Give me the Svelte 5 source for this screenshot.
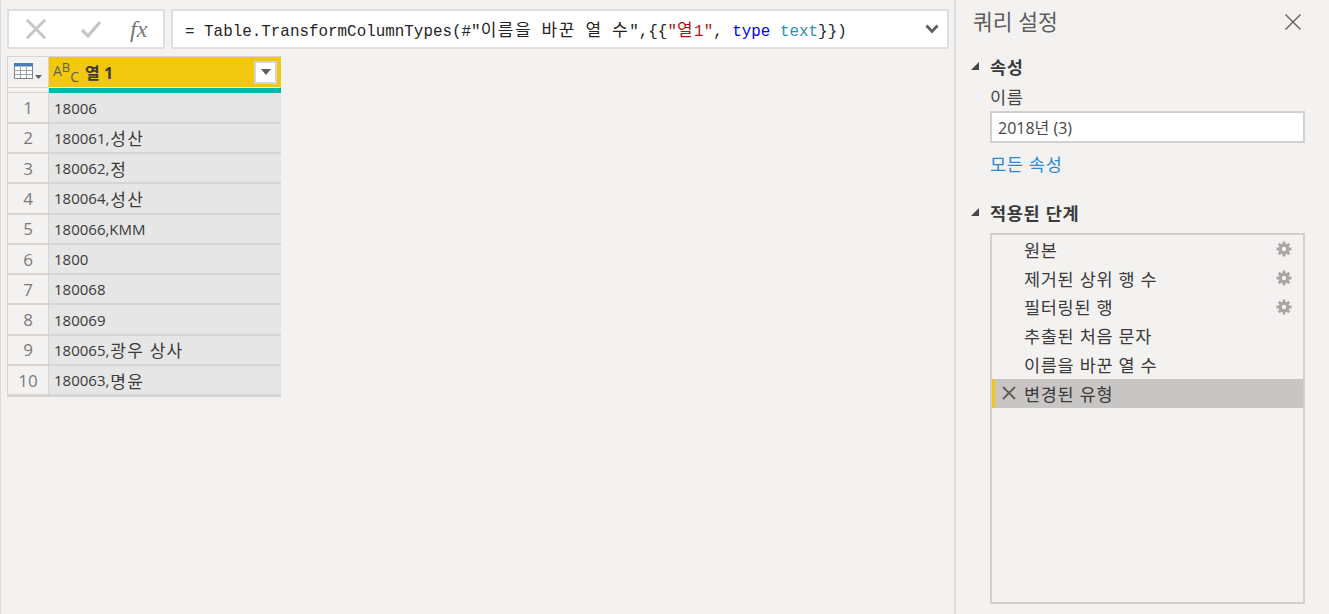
<script>
  const rows = [
    ["18006", ""],
    ["180061,", "성산"],
    ["180062,", "정"],
    ["180064,", "성산"],
    ["180066,KMM", ""],
    ["1800", ""],
    ["180068", ""],
    ["180069", ""],
    ["180065,", "광우 상사"],
    ["180063,", "명윤"]
  ];
  const steps = [
    { name: "원본", gear: true },
    { name: "제거된 상위 행 수", gear: true },
    { name: "필터링된 행", gear: true },
    { name: "추출된 처음 문자" },
    { name: "이름을 바꾼 열 수" },
    { name: "변경된 유형", active: true }
  ];
</script>

<div class="page">
  <main class="main">
    <div class="toolbar">
      <div class="actions">
        <svg class="act" width="24" height="24" viewBox="0 0 24 24"><path d="M2 2 22 22M22 2 2 22" stroke="#c8c6c4" stroke-width="3.2" fill="none"/></svg>
        <svg class="act check" width="22" height="18" viewBox="0 0 22 18"><path d="M2 10 8 16 20 2" stroke="#c8c6c4" stroke-width="3.2" fill="none"/></svg>
        <span class="fx">fx</span>
      </div>
      <div class="formula">
        <code>= Table.TransformColumnTypes(#"<span class="han">이름을</span> <span class="han">바꾼</span> <span class="han">열</span> <span class="han">수</span>",&#123;&#123;<span class="str">"<span class="han">열</span>1"</span>, <span class="kw">type</span> <span class="ty">text</span>&#125;&#125;)</code>
        <svg class="chev" width="14" height="10" viewBox="0 0 14 10"><path d="M1.5 1.5 7 7.5 12.5 1.5" stroke="#605e5c" stroke-width="2.8" fill="none"/></svg>
      </div>
    </div>

    <div class="grid">
      <div class="corner">
        <svg width="30" height="20" viewBox="0 0 30 20">
          <rect x="0.5" y="1.5" width="18" height="15" fill="#fff" stroke="#7a8593"/>
          <rect x="0" y="1" width="19" height="3.5" fill="#4a7fb5"/>
          <path d="M6.5 5v11M12.5 5v11M1 8.5h17M1 12.5h17" stroke="#98a2ad" fill="none"/>
          <path d="M21 13h7l-3.5 4z" fill="#605e5c"/>
        </svg>
      </div>
      <div class="head">
        <span class="abc"><i>A</i><i class="b">B</i><i class="c">C</i></span>
        <span class="title">열 1</span>
        <span class="drop"><svg width="10" height="6" viewBox="0 0 10 6"><path d="M0 0h10L5 6z" fill="#605e5c"/></svg></span>
      </div>
      <div class="gap"></div>
      <div class="quality"></div>
      {#each rows as [code, name], i}
        <div class="num">{i + 1}</div>
        <div class="cell">{code}<span class="cell-han">{name}</span></div>
      {/each}
    </div>
  </main>

  <aside class="side">
    <header class="side-head">
      <h1>쿼리 설정</h1>
      <svg width="18" height="18" viewBox="0 0 18 18"><path d="M1.5 1.5 16.5 16.5M16.5 1.5 1.5 16.5" stroke="#605e5c" stroke-width="1.4" fill="none"/></svg>
    </header>

    <h2><span class="tri"></span>속성</h2>
    <label class="lbl" for="qname">이름</label>
    <input id="qname" class="name" value="2018년 (3)" />
    <span class="link">모든 속성</span>

    <h2 class="applied"><span class="tri"></span>적용된 단계</h2>
    <ul class="steps">
      {#each steps as s}
        <li class:active={s.active}>
          {#if s.active}
            <svg class="del" width="14" height="14" viewBox="0 0 14 14"><path d="M1 1 13 13M13 1 1 13" stroke="#605e5c" stroke-width="1.8" fill="none"/></svg>
          {/if}
          <span>{s.name}</span>
          {#if s.gear}
            <svg class="gear" width="16" height="16" viewBox="0 0 16 16">
              <circle cx="8" cy="8" r="3.8" fill="none" stroke="#a8a6a4" stroke-width="3.2"/>
              <path d="M8 0.5v3M8 12.5v3M0.5 8h3M12.5 8h3M2.7 2.7l2.1 2.1M11.2 11.2l2.1 2.1M13.3 2.7l-2.1 2.1M4.8 11.2l-2.1 2.1" stroke="#a8a6a4" stroke-width="2.8" fill="none"/>
            </svg>
          {/if}
        </li>
      {/each}
    </ul>
  </aside>
</div>

<style>
  :global(body) {
    margin: 0;
    background: #f3f2f1;
    font-family: "Open Sans", "Noto Sans CJK KR", sans-serif;
    color: #3b3a39;
  }

  .page {
    display: flex;
    width: 1329px;
    height: 614px;
    overflow: hidden;
    box-sizing: border-box;
    border-left: 1px solid #dcdbd9;
  }

  .main {
    flex: none;
    width: 955px;
    box-sizing: border-box;
    padding: 9px 5px 0 6px;
    border-right: 2px solid #e1dfdd;
  }

  .toolbar {
    display: flex;
    gap: 6px;
    height: 40px;
  }

  .actions,
  .formula {
    display: flex;
    align-items: center;
    box-sizing: border-box;
    background: #fff;
    border: 2px solid #e1dfdd;
  }

  .actions {
    width: 158px;
    flex: none;
  }

  .act {
    margin-left: 16px;
    width: 22px;
  }

  .act.check {
    margin-left: 33px;
  }

  .fx {
    margin-left: 28px;
    font-family: "Liberation Serif", serif;
    font-style: italic;
    font-size: 24px;
    color: #797775;
  }

  .formula {
    flex: 1;
    justify-content: space-between;
    padding: 0 8px 0 12px;
  }

  code {
    padding-bottom: 2px;
    font-family: "Liberation Mono", "Noto Sans CJK KR", monospace;
    font-size: 15.9px;
    color: #252423;
    white-space: pre;
  }

  .han {
    font-size: 17px;
    letter-spacing: 1.5px;
  }

  .str { color: #a31515; }
  .kw { color: #0000ff; }
  .ty { color: #2b91af; }

  .grid {
    display: grid;
    grid-template-columns: 41px 232px;
    grid-template-rows: 30px 6.4px repeat(10, 30.3px);
    width: 274px;
    margin-top: 7px;
    box-sizing: border-box;
    border: 1px solid #d6d5d3;
  }

  .corner {
    grid-row: 1;
    display: flex;
    align-items: center;
    padding-left: 6px;
    border-right: 1px solid #d6d5d3;
    background: #f3f2f1;
  }

  .head {
    display: flex;
    align-items: center;
    background: #f2c80f;
    padding: 0 4px;
    font-weight: 700;
    font-size: 16px;
    color: #3b3a39;
  }

  .abc {
    display: flex;
    width: 32px;
    height: 26px;
    font-weight: 500;
    line-height: 1;
    color: #605e5c;
  }

  .abc i {
    margin-top: 5px;
    font-size: 14px;
    font-style: normal;
  }

  .abc i.b {
    margin-top: 2px;
    font-size: 13px;
  }

  .abc i.c {
    margin-top: 11px;
    font-size: 14px;
  }

  .title {
    flex: 1;
  }

  .drop {
    display: flex;
    align-items: center;
    justify-content: center;
    width: 19px;
    height: 19px;
    background: #fff;
    border: 2px solid #d6d5d3;
  }

  .gap {
    border-top: 1px solid #d6d5d3;
    border-bottom: 1px solid #d6d5d3;
    border-right: 1px solid #d6d5d3;
  }

  .quality {
    background: #01b8aa;
    margin-top: 1px;
  }

  .num,
  .cell {
    display: flex;
    align-items: center;
    box-sizing: border-box;
    border-bottom: 2px solid #d6d5d3;
  }

  .num {
    justify-content: center;
    font-size: 17px;
    color: #7b7a7a;
    background: #f3f2f1;
    border-right: 1px solid #d6d5d3;
  }

  .cell {
    padding-left: 5px;
    font-size: 15px;
    font-weight: 500;
    color: #3b3a39;
    background: #e6e6e6;
    white-space: pre;
  }

  .cell-han {
    margin-left: 1px;
    font-size: 17px;
    font-weight: 400;
    letter-spacing: 1.2px;
  }

  .side {
    flex: none;
    width: 373px;
    box-sizing: border-box;
    padding: 7px 24px 0 34px;
    display: flex;
    flex-direction: column;
  }

  .side-head {
    display: flex;
    align-items: center;
    justify-content: space-between;
    margin-left: -17px;
    margin-right: 3px;
  }

  h1 {
    margin: 0;
    font-size: 21.5px;
    font-weight: 400;
    line-height: 30px;
    color: #605e5c;
  }

  h2 {
    position: relative;
    margin: 18px 0 0;
    font-size: 17.5px;
    font-weight: 700;
    letter-spacing: 0.7px;
    line-height: 24px;
    color: #3b3a39;
  }

  h2.applied {
    margin-top: 24px;
  }

  .tri {
    position: absolute;
    left: -19px;
    top: 7px;
    width: 0;
    height: 0;
    border-left: 8px solid transparent;
    border-bottom: 8px solid #484644;
  }

  .lbl {
    display: block;
    margin-top: 6px;
    font-size: 17.5px;
    letter-spacing: 0.7px;
    line-height: 24px;
    color: #484644;
  }

  .name {
    display: block;
    box-sizing: border-box;
    width: 315px;
    height: 32px;
    margin-top: 2px;
    padding: 0 6px;
    border: 2px solid #d2d0ce;
    background: #fff;
    font: inherit;
    font-size: 16px;
    color: #484644;
  }

  .link {
    margin-top: 8px;
    font-size: 17.5px;
    letter-spacing: 0.7px;
    line-height: 26px;
    color: #2b88d8;
  }

  .steps {
    list-style: none;
    width: 315px;
    height: 371px;
    box-sizing: border-box;
    margin: 8px 0 0;
    padding: 0;
    border: 2px solid #d2d0ce;
  }

  li {
    position: relative;
    display: flex;
    align-items: center;
    justify-content: space-between;
    height: 28.8px;
    padding: 0 11px 0 32px;
    font-size: 17.5px;
    letter-spacing: 0.7px;
    color: #3b3a39;
  }

  li.active {
    background: #c8c6c4;
    border-left: 3px solid #f2c80f;
    padding-left: 29px;
  }

  .del {
    position: absolute;
    left: 7px;
    top: 7px;
  }

  .gear {
    flex: none;
  }
</style>
